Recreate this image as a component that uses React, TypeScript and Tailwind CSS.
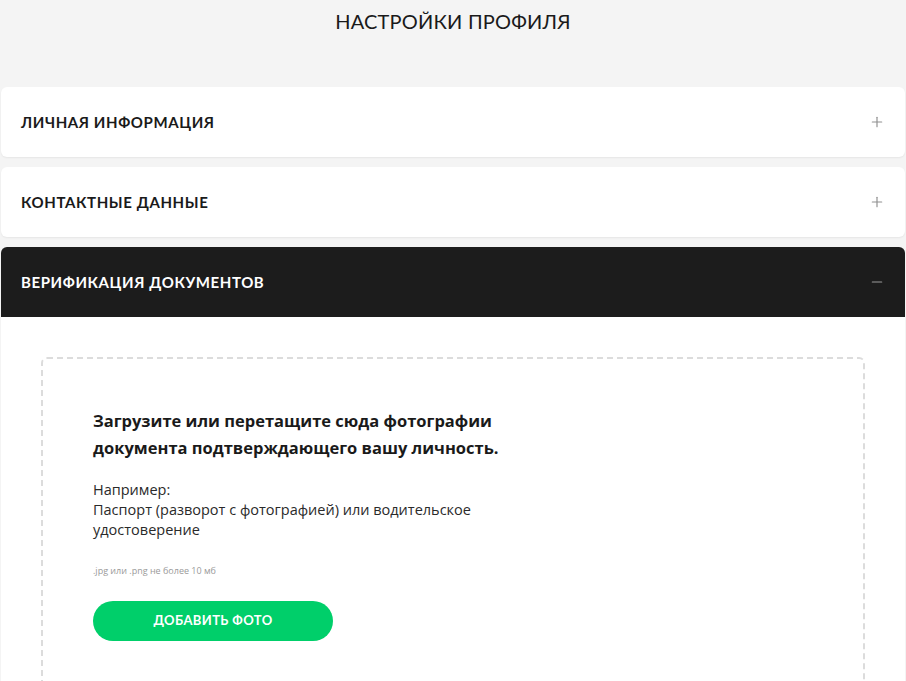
import { Plus, Minus } from "lucide-react";

const font = { fontFamily: "Lato, 'Open Sans', sans-serif" };
const body = { fontFamily: "'Open Sans', Lato, sans-serif" };

function Section({ title, open = false }: { title: string; open?: boolean }) {
  return (
    <div
      className={`mx-px flex h-[70px] items-center justify-between px-5 ${
        open ? "rounded-t-md bg-[#1c1c1c] text-white" : "rounded-md bg-white text-[#1a1a1a] shadow-[0_1px_2px_rgba(0,0,0,0.06)]"
      }`}
    >
      <span className="text-[15px] font-bold tracking-[0.6px]">{title}</span>
      {open ? (
        <Minus className="h-4 w-4 text-[#9a9a9a]" strokeWidth={1.75} />
      ) : (
        <Plus className="h-4 w-4 text-[#8f8f8f]" strokeWidth={1.75} />
      )}
    </div>
  );
}

export default function App() {
  return (
    <div className="min-h-[681px] bg-[#f4f4f4]" style={font}>
      <h1 className="pt-[6px] text-center text-[20px] font-normal uppercase tracking-[0.2px] text-[#1a1a1a]">
        Настройки профиля
      </h1>

      <div className="mt-[51px] flex flex-col gap-[10px]">
        <Section title="ЛИЧНАЯ ИНФОРМАЦИЯ" />
        <Section title="КОНТАКТНЫЕ ДАННЫЕ" />
        <div>
          <Section title="ВЕРИФИКАЦИЯ ДОКУМЕНТОВ" open />
          <div className="mx-px bg-white px-10 pt-10">
            <div className="h-[330px] rounded-md border-2 border-dashed border-[#dcdcdc] px-[50px] pt-[48px]" style={body}>
              <p className="text-[16.5px] font-bold leading-[27px] text-[#1a1a1a]">
                Загрузите или перетащите сюда фотографии
                <br />
                документа подтверждающего вашу личность.
              </p>
              <p className="mt-[19px] text-[14.5px] leading-[20px] text-[#2a2a2a]">
                Например:
                <br />
                Паспорт (разворот с фотографией) или водительское
                <br />
                удостоверение
              </p>
              <p className="mt-[24px] text-[9px] text-[#9a9a9a]">.jpg или .png не более 10 мб</p>
              <button
                className="mt-[23px] flex h-10 w-[240px] items-center justify-center rounded-full bg-[#00cf6a] text-[13px] font-bold tracking-[0.4px] text-white"
                style={font}
              >
                ДОБАВИТЬ ФОТО
              </button>
            </div>
          </div>
        </div>
      </div>
    </div>
  );
}
